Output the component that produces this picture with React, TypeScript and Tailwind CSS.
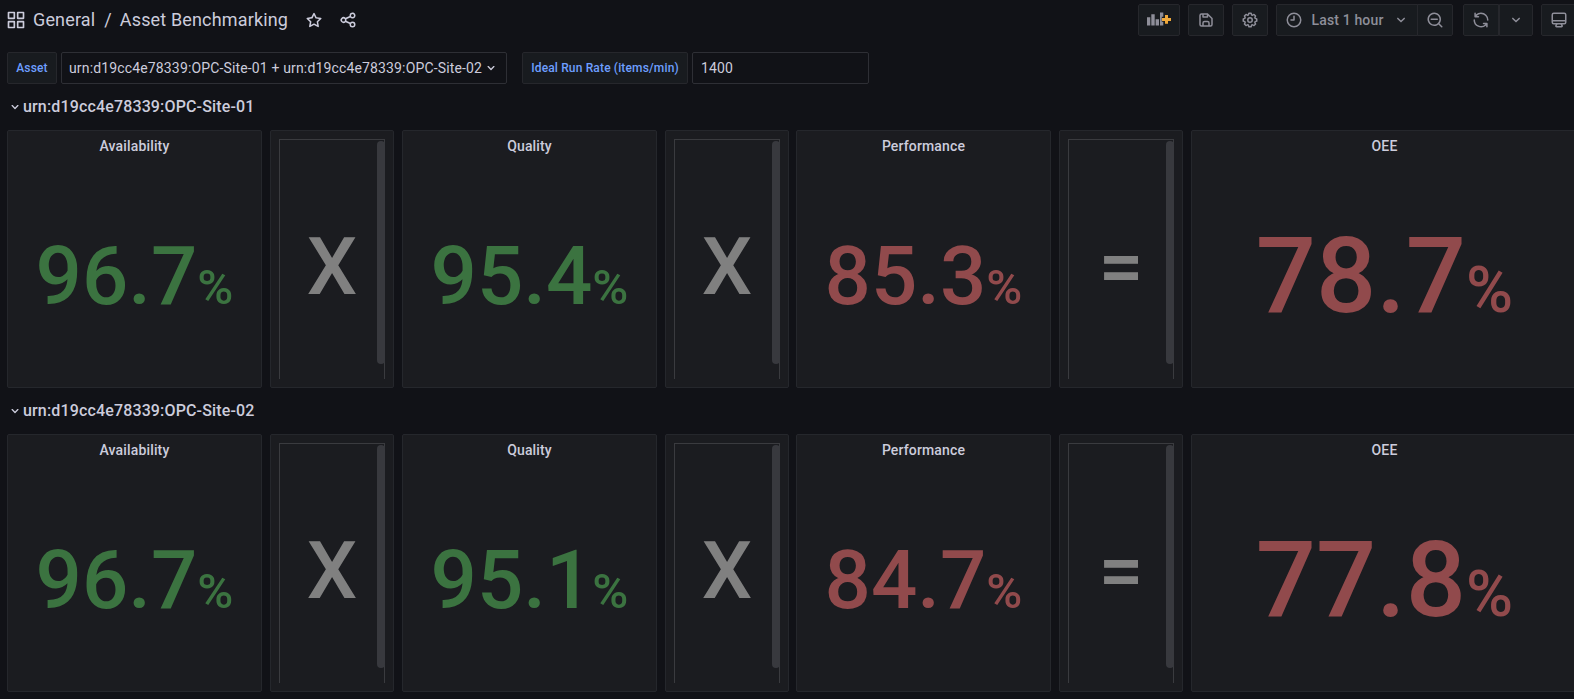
import type { ReactNode } from "react";

const PATHS = {
  apps: "M10,13H3a1,1,0,0,0-1,1v7a1,1,0,0,0,1,1h7a1,1,0,0,0,1-1V14A1,1,0,0,0,10,13ZM9,20H4V15H9ZM21,2H14a1,1,0,0,0-1,1v7a1,1,0,0,0,1,1h7a1,1,0,0,0,1-1V3A1,1,0,0,0,21,2ZM20,9H15V4h5Zm1,4H14a1,1,0,0,0-1,1v7a1,1,0,0,0,1,1h7a1,1,0,0,0,1-1V14A1,1,0,0,0,21,13Zm-1,7H15V15h5ZM10,2H3A1,1,0,0,0,2,3v7a1,1,0,0,0,1,1h7a1,1,0,0,0,1-1V3A1,1,0,0,0,10,2ZM9,9H4V4H9Z",
  star: "M22,9.67A1,1,0,0,0,21.14,9l-5.69-.83L12.9,3a1,1,0,0,0-1.8,0L8.55,8.16,2.86,9a1,1,0,0,0-.81.68,1,1,0,0,0,.25,1l4.13,4-1,5.68A1,1,0,0,0,6.9,21.44L12,18.77l5.1,2.67a.93.93,0,0,0,.46.12,1,1,0,0,0,.59-.19,1,1,0,0,0,.4-1l-1-5.68,4.13-4A1,1,0,0,0,22,9.67Zm-6.15,4a1,1,0,0,0-.29.88l.72,4.2-3.76-2a1.06,1.06,0,0,0-.94,0l-3.76,2,.72-4.2a1,1,0,0,0-.29-.88l-3-3,4.21-.61a1,1,0,0,0,.76-.55L12,5.7l1.88,3.82a1,1,0,0,0,.76.55l4.21.61Z",
  share: "M18,14a4,4,0,0,0-3.08,1.48l-5.1-2.35a3.64,3.64,0,0,0,0-2.26l5.1-2.35A4,4,0,1,0,14,6a4.17,4.17,0,0,0,.07.71L8.79,9.14a4,4,0,1,0,0,5.72l5.28,2.43A4.17,4.17,0,0,0,14,18a4,4,0,1,0,4-4ZM18,4a2,2,0,1,1-2,2A2,2,0,0,1,18,4ZM6,14a2,2,0,1,1,2-2A2,2,0,0,1,6,14Zm12,6a2,2,0,1,1,2-2A2,2,0,0,1,18,20Z",
  save: "M20.71,9.29l-6-6a1,1,0,0,0-.32-.21A1.09,1.09,0,0,0,14,3H6A3,3,0,0,0,3,6V18a3,3,0,0,0,3,3H18a3,3,0,0,0,3-3V10A1,1,0,0,0,20.71,9.29ZM9,5h4V7H9Zm6,14H9V16a1,1,0,0,1,1-1h4a1,1,0,0,1,1,1Zm4-1a1,1,0,0,1-1,1H17V16a3,3,0,0,0-3-3H10a3,3,0,0,0-3,3v3H6a1,1,0,0,1-1-1V6A1,1,0,0,1,6,5H7V8A1,1,0,0,0,8,9h6a1,1,0,0,0,1-1V6.41l4,4Z",
  down: "M17,9.17a1,1,0,0,0-1.41,0L12,12.71,8.46,9.17a1,1,0,0,0-1.41,0,1,1,0,0,0,0,1.42l4.24,4.24a1,1,0,0,0,1.42,0L17,10.59A1,1,0,0,0,17,9.17Z",
  clock: "M12,2A10,10,0,1,0,22,12,10,10,0,0,0,12,2Zm0,18a8,8,0,1,1,8-8A8,8,0,0,1,12,20ZM12,6a1,1,0,0,0-1,1v4H8a1,1,0,0,0,0,2h4a1,1,0,0,0,1-1V7A1,1,0,0,0,12,6Z",
  zoomOut: "M21.71,20.29,18,16.61A9,9,0,1,0,16.61,18l3.68,3.68a1,1,0,0,0,1.42,0A1,1,0,0,0,21.71,20.29ZM11,18a7,7,0,1,1,7-7A7,7,0,0,1,11,18Zm4-8H7a1,1,0,0,0,0,2h8a1,1,0,0,0,0-2Z",
  sync: "M19.91,15.51H15.38a1,1,0,0,0,0,2h2.4A8,8,0,0,1,4,12a1,1,0,1,0-2,0,10,10,0,0,0,16.88,7.23V21a1,1,0,0,0,2,0V16.5A1,1,0,0,0,19.91,15.51ZM12,2A10,10,0,0,0,5.12,4.77V3a1,1,0,0,0-2,0V7.5a1,1,0,0,0,1,1h4.5a1,1,0,0,0,0-2H6.22A8,8,0,0,1,20,12a1,1,0,0,0,2,0A10,10,0,0,0,12,2Z",
  monitor: "M19,2H5A3,3,0,0,0,2,5V15a3,3,0,0,0,3,3H7.64l-.58,1a2,2,0,0,0,0,2,2,2,0,0,0,1.75,1h6.46A2,2,0,0,0,17,21a2,2,0,0,0,0-2l-.59-1H19a3,3,0,0,0,3-3V5A3,3,0,0,0,19,2ZM8.77,20,10,18H14l1.2,2ZM20,15a1,1,0,0,1-1,1H5a1,1,0,0,1-1-1V14H20Zm0-3H4V5A1,1,0,0,1,5,4H19a1,1,0,0,1,1,1Z",
  cog: "M21.32,9.55l-1.89-.63.89-1.78A1,1,0,0,0,20.13,6L18,3.87a1,1,0,0,0-1.15-.19l-1.78.89-.63-1.89A1,1,0,0,0,13.5,2h-3a1,1,0,0,0-.95.68L8.92,4.57,7.14,3.68A1,1,0,0,0,6,3.87L3.87,6a1,1,0,0,0-.19,1.15l.89,1.78-1.89.63A1,1,0,0,0,2,10.5v3a1,1,0,0,0,.68.95l1.89.63-.89,1.78A1,1,0,0,0,3.87,18L6,20.13a1,1,0,0,0,1.15.19l1.78-.89.63,1.89a1,1,0,0,0,.95.68h3a1,1,0,0,0,.95-.68l.63-1.89,1.78.89A1,1,0,0,0,18,20.13L20.13,18a1,1,0,0,0,.19-1.15l-.89-1.78,1.89-.63A1,1,0,0,0,22,13.5v-3A1,1,0,0,0,21.32,9.55ZM20,12.78l-1.2.4A2,2,0,0,0,17.64,16l.57,1.14-1.1,1.1L16,17.64a2,2,0,0,0-2.79,1.16l-.4,1.2H11.22l-.4-1.2A2,2,0,0,0,8,17.64l-1.14.57-1.1-1.1L6.36,16A2,2,0,0,0,5.2,13.18L4,12.78V11.22l1.2-.4A2,2,0,0,0,6.36,8L5.79,6.89l1.1-1.1L8,6.36A2,2,0,0,0,10.82,5.2l.4-1.2h1.56l.4,1.2A2,2,0,0,0,16,6.36l1.14-.57,1.1,1.1L17.64,8a2,2,0,0,0,1.16,2.79l1.2.4ZM12,8a4,4,0,1,0,4,4A4,4,0,0,0,12,8Zm0,6a2,2,0,1,1,2-2A2,2,0,0,1,12,14Z",
};

function Icon({ name, size = 18 }: { name: keyof typeof PATHS; size?: number }) {
  return (
    <svg className="shrink-0" width={size} height={size} viewBox="0 0 24 24" fill="currentColor">
      <path d={PATHS[name]} />
    </svg>
  );
}

function AddPanelIcon() {
  return (
    <svg className="shrink-0" width="24" height="16" viewBox="0 0 24 16" fill="currentColor">
      <path d="M0 5.300h3.300v8.200H0zM4.300 2.300h3.400v11.200H4.300zM8.600 7.300h3.400v6.200H8.600zM13 .5h3.300v4.200h-1.500v5h1.500v3.800H13z" />
      <path d="M18 3h3v2.900h3v3h-3v2.900h-3V8.900h-3v-3h3z" fill="#f0a93b" />
    </svg>
  );
}

function ToolButton({ className, children }: { className: string; children: ReactNode }) {
  return (
    <button
      className={`flex h-8 shrink-0 items-center justify-center rounded-[2px] border border-[#26272c] bg-[#181b1f] ${className}`}
    >
      {children}
    </button>
  );
}

function Header() {
  return (
    <header className="flex h-10 items-center pl-[6px] text-[#ccccdc]">
      <Icon name="apps" size={20} />
      <h1 className="ml-[7px] flex text-[18px] leading-6 tracking-[0.15px] whitespace-nowrap">
        <span>General</span>
        <span className="mr-2 ml-[9px]">/</span>
        <span>Asset Benchmarking</span>
      </h1>
      <div className="ml-[17px] flex gap-4">
        <Icon name="star" />
        <Icon name="share" />
      </div>
      <div className="ml-auto flex w-[436px] shrink-0 overflow-hidden text-[#8e8e99]">
        <ToolButton className="w-[42px]">
          <AddPanelIcon />
        </ToolButton>
        <ToolButton className="ml-2 w-9">
          <Icon name="save" />
        </ToolButton>
        <ToolButton className="ml-2 w-9">
          <Icon name="cog" />
        </ToolButton>
        <ToolButton className="ml-2 w-[142px] rounded-r-none">
          <Icon name="clock" />
          <span className="mr-2 ml-[9px] text-sm font-medium tracking-[0.15px] whitespace-nowrap">Last 1 hour</span>
          <Icon name="down" />
        </ToolButton>
        <ToolButton className="-ml-px w-9 rounded-l-none">
          <Icon name="zoomOut" />
        </ToolButton>
        <ToolButton className="ml-[10px] w-9 rounded-r-none">
          <Icon name="sync" />
        </ToolButton>
        <ToolButton className="w-[34px] rounded-l-none">
          <Icon name="down" />
        </ToolButton>
        <ToolButton className="ml-2 w-9">
          <Icon name="monitor" />
        </ToolButton>
      </div>
    </header>
  );
}

function Label({ className, children }: { className: string; children: ReactNode }) {
  return (
    <label
      className={`flex h-8 items-center justify-center rounded-[2px] border border-[#26272c] bg-[#181b1f] text-xs font-medium tracking-[0.15px] whitespace-nowrap text-[#6e9fff] ${className}`}
    >
      {children}
    </label>
  );
}

function Variables() {
  return (
    <div className="mt-3 flex h-8 pl-[7px] text-sm tracking-[0.15px] text-[#ccccdc]">
      <Label className="w-[50px]">Asset</Label>
      <button className="ml-1 flex w-[446px] items-center gap-px rounded-[2px] border border-[#2e2f35] bg-[#111217] pl-[7px] whitespace-nowrap">
        urn:d19cc4e78339:OPC-Site-01 + urn:d19cc4e78339:OPC-Site-02
        <Icon name="down" size={16} />
      </button>
      <Label className="ml-[15px] w-[166px]">Ideal Run Rate (items/min)</Label>
      <div className="ml-1 flex w-[177px] items-center rounded-[2px] border border-[#2e2f35] bg-[#111217] pl-2">1400</div>
    </div>
  );
}

function Panel({ className, children }: { className: string; children: ReactNode }) {
  return (
    <section className={`h-[258px] shrink-0 rounded-[2px] border border-[#25272c] bg-[#1b1c20] ${className}`}>
      {children}
    </section>
  );
}

function Stat({ title, value, good, large }: { title: string; value: string; good?: boolean; large?: boolean }) {
  return (
    <Panel className={`flex flex-col ${large ? "w-[387px]" : "w-[255px]"}`}>
      <h2 className="pt-1 text-center text-sm leading-[22px] font-medium tracking-[0.15px] text-[#ccccdc]">{title}</h2>
      <div
        className={`flex items-baseline justify-center font-medium ${good ? "text-[#3b7340]" : "text-[#914a4c]"} ${
          large ? "mt-14 text-[106px] leading-[126px]" : "mt-[70px] text-[81.600px] leading-[98px]"
        }`}
      >
        <span>{value}</span>
        <span className={large ? "text-[64px]" : "text-[49px]"}>%</span>
      </div>
    </Panel>
  );
}

function Operator({ sign }: { sign: string }) {
  return (
    <Panel className="w-[124px] p-2">
      <div className="relative flex h-[240px] w-[106px] justify-center border border-b-0 border-[#3a3b3f] pt-[79px] text-[80px] leading-[96px] font-medium text-[#808080]">
        {sign}
        <span className="absolute top-[1px] -right-px h-[223px] w-2 rounded-full bg-[#38393e]" />
      </div>
    </Panel>
  );
}

type Site = { name: string; availability: string; quality: string; performance: string; oee: string };

const SITES: Site[] = [
  { name: "urn:d19cc4e78339:OPC-Site-01", availability: "96.7", quality: "95.4", performance: "85.3", oee: "78.7" },
  { name: "urn:d19cc4e78339:OPC-Site-02", availability: "96.7", quality: "95.1", performance: "84.7", oee: "77.8" },
];

function SiteRow({ site }: { site: Site }) {
  return (
    <div>
      <div className="flex h-[46px] items-center pl-[7px] text-base font-medium tracking-[0.15px] text-[#ccccdc]">
        <Icon name="down" size={16} />
        {site.name}
      </div>
      <div className="flex gap-2 pl-[7px]">
        <Stat title="Availability" value={site.availability} good />
        <Operator sign="X" />
        <Stat title="Quality" value={site.quality} good />
        <Operator sign="X" />
        <div className="-ml-px flex gap-2">
          <Stat title="Performance" value={site.performance} />
          <Operator sign="=" />
          <Stat title="OEE" value={site.oee} large />
        </div>
      </div>
    </div>
  );
}

export default function App() {
  return (
    <main className="h-[699px] w-[1574px] overflow-hidden bg-[#111217] font-[Roboto,sans-serif]">
      <Header />
      <Variables />
      {SITES.map((site) => (
        <SiteRow key={site.name} site={site} />
      ))}
    </main>
  );
}
